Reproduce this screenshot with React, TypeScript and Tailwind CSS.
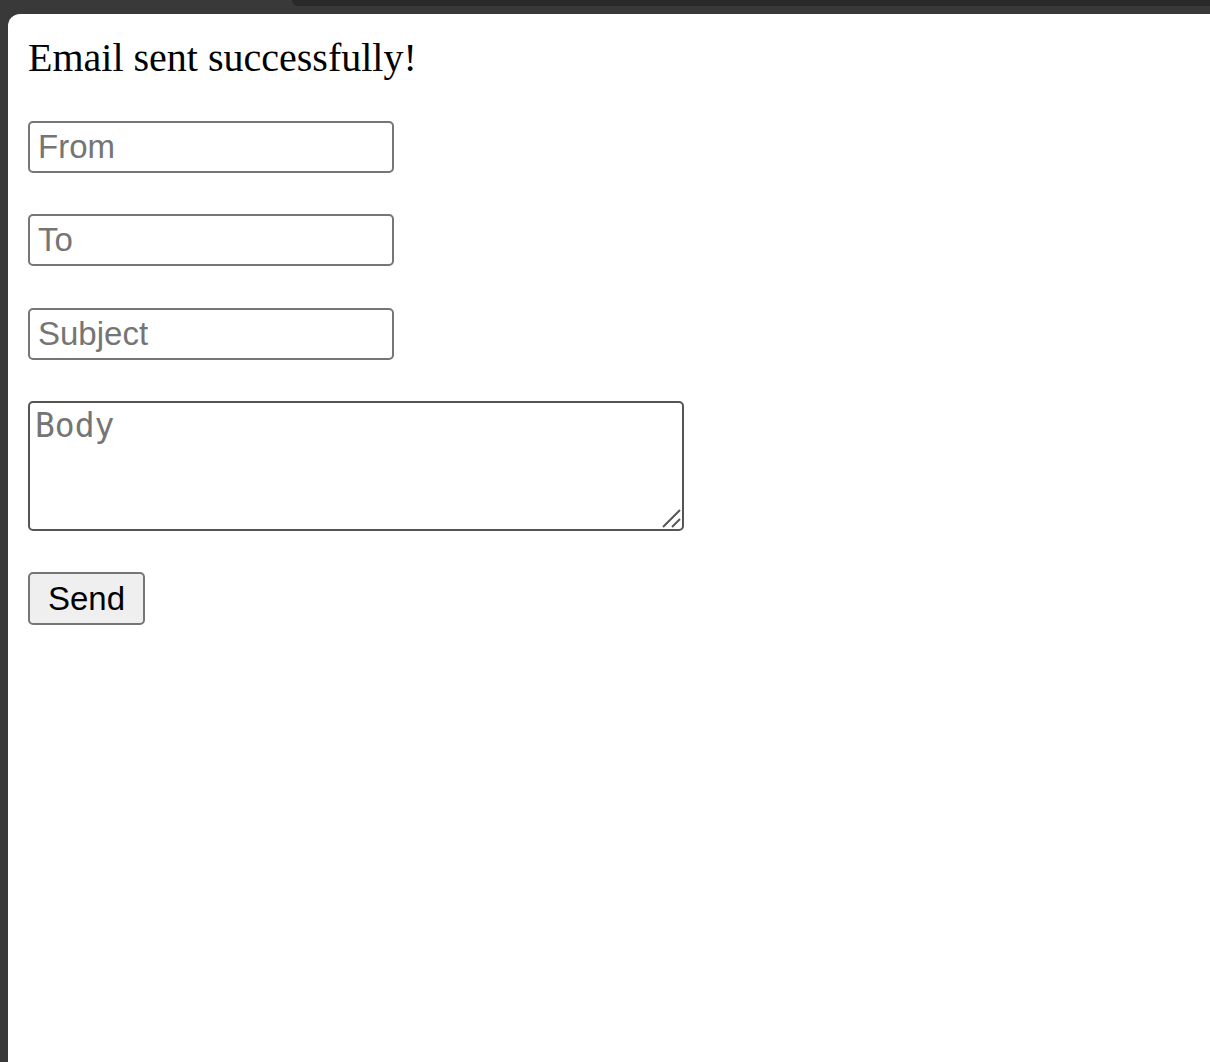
import { useState } from "react";

export default function App() {
  const [from, setFrom] = useState("");
  const [to, setTo] = useState("");
  const [subject, setSubject] = useState("");
  const [body, setBody] = useState("");

  const inputClass =
    "block h-[52px] w-[366px] rounded-[5px] border-2 border-[#767676] bg-white px-[8px] text-[33px] leading-[38px] text-black outline-none placeholder:text-[#757575] font-['Liberation_Sans',Arial,sans-serif]";

  return (
    <div className="flex h-[1062px] w-full flex-col overflow-hidden bg-[#393939]">
      <div className="h-[14px] shrink-0">
        <div className="ml-[292px] h-[6px] rounded-bl-[12px] bg-[#292929]" />
      </div>
      <div className="flex flex-1 pl-[8px]">
        <div className="flex-1 rounded-tl-[12px] bg-white p-[20px]">
          <p className="mt-[2px] font-['Liberation_Serif','Times_New_Roman',serif] text-[40px] leading-[44px] text-black">
            Email sent successfully!
          </p>
          <form className="mt-[41px] flex flex-col" onSubmit={(e) => e.preventDefault()}>
            <input className={inputClass} placeholder="From" value={from} onChange={(e) => setFrom(e.target.value)} />
            <input
              className={`${inputClass} mt-[41px]`}
              placeholder="To"
              value={to}
              onChange={(e) => setTo(e.target.value)}
            />
            <input
              className={`${inputClass} mt-[42px]`}
              placeholder="Subject"
              value={subject}
              onChange={(e) => setSubject(e.target.value)}
            />
            <div className="relative mt-[41px] h-[130px] w-[656px]">
              <textarea
                className="block h-full w-full resize-none rounded-[5px] border-2 border-[#555555] bg-white px-[5px] py-[4px] font-['DejaVu_Sans_Mono',monospace] text-[33px] leading-[38px] text-black outline-none placeholder:text-[#757575]"
                placeholder="Body"
                value={body}
                onChange={(e) => setBody(e.target.value)}
              />
              <svg
                className="pointer-events-none absolute bottom-[3px] right-[3px]"
                width="20"
                height="20"
                viewBox="0 0 20 20"
                aria-hidden
              >
                <line x1="2" y1="19" x2="19" y2="2" stroke="#555" strokeWidth="2" />
                <line x1="11" y1="19" x2="19" y2="11" stroke="#555" strokeWidth="2" />
              </svg>
            </div>
            <div className="mt-[41px]">
              <button
                type="submit"
                className="h-[53px] w-[117px] rounded-[5px] border-2 border-[#767676] bg-[#efefef] font-['Liberation_Sans',Arial,sans-serif] text-[33px] leading-[38px] text-black"
              >
                Send
              </button>
            </div>
          </form>
        </div>
      </div>
    </div>
  );
}
